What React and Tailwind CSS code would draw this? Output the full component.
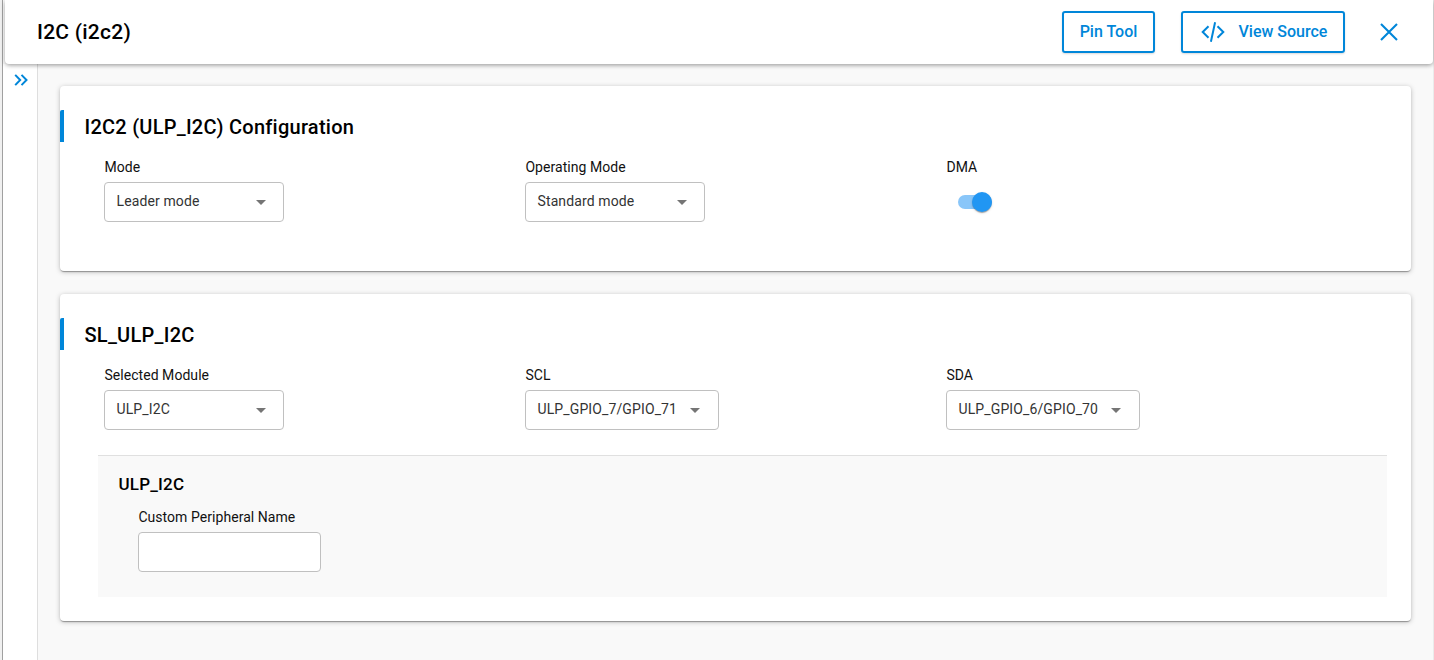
const BLUE = '#0086d9';

function Caret() {
  return (
    <svg className="h-6 w-6 shrink-0 fill-[#757575]" viewBox="0 0 24 24">
      <path d="M7 10l5 5 5-5z" />
    </svg>
  );
}

function Select({ value, wide = false }) {
  return (
    <button
      className={`flex h-10 items-center justify-between rounded-[4px] border border-[#c0c0c0] bg-white pl-[11.5px] text-left ${wide ? 'w-[194px] pr-[11px]' : 'w-[180px] pr-[10.5px]'}`}
    >
      <span className="relative -top-px text-[14px] leading-5 tracking-[0.12px] whitespace-nowrap text-[#333]">{value}</span>
      <Caret />
    </button>
  );
}

function Field({ label, children }) {
  return (
    <div className="flex flex-col items-start">
      <label className="h-[25px] pl-[0.4px] text-[14px] leading-5 tracking-[0.05px] text-[#111]">{label}</label>
      {children}
    </div>
  );
}

function Toggle() {
  return (
    <div className="mt-[10px] ml-3 flex h-5 w-[34px] items-center rounded-full">
      <div className="flex h-[14px] w-[34px] items-center justify-end rounded-full bg-[#89c6f9]">
        <div className="h-5 w-5 shrink-0 rounded-full bg-[#2196f3] shadow-[0_2px_1px_-1px_rgba(0,0,0,0.2),0_1px_1px_rgba(0,0,0,0.14),0_1px_3px_rgba(0,0,0,0.12)]" />
      </div>
    </div>
  );
}

function Card({ title, className, children }) {
  return (
    <section
      className={`rounded-[4px] bg-white pt-6 shadow-[0_2px_1px_-1px_rgba(0,0,0,0.2),0_1px_1px_rgba(0,0,0,0.14),0_1px_5px_rgba(0,0,0,0.25)] ${className}`}
    >
      <h2 className="flex h-8 items-center rounded-tl-[2px] border-l-4 border-[#0086d9] pl-[20.5px] text-[20px] font-medium tracking-[0.25px] text-black">
        <span className="relative top-px">{title}</span>
      </h2>
      {children}
    </section>
  );
}

export default function App() {
  return (
    <div className="flex h-[660px] w-[1434px] overflow-hidden bg-[#f9f9f9] font-[Roboto,sans-serif]">
      <div className="w-[3px] shrink-0 border-r border-[#a0a0a0] bg-[#f0f0f0]" />
      <div className="flex min-w-0 flex-1 flex-col border-r border-[#ebebeb]">
        <header className="z-10 ml-[2px] flex h-[64px] shrink-0 items-center rounded-b-[4px] bg-white pl-8 shadow-[0_2px_4px_-1px_rgba(0,0,0,0.25),0_1px_5px_rgba(0,0,0,0.2)]">
          <h1 className="flex-1 text-[21px] leading-7 font-medium tracking-[0.24px] text-black">I2C (i2c2)</h1>
          <button className="flex h-[42px] w-[93px] items-center justify-center rounded-[3px] border-2 border-[#0086d9] text-[16px] font-medium text-[#0086d9] shadow-[0_1px_2px_rgba(0,0,0,0.15)]">
            Pin Tool
          </button>
          <button className="ml-[26px] flex h-[42px] w-[164px] items-center rounded-[3px] border-2 border-[#0086d9] pl-[18px] text-[16px] font-medium text-[#0086d9] shadow-[0_1px_2px_rgba(0,0,0,0.15)]">
            <svg className="mr-[13.5px] h-[20px] w-[24px]" viewBox="0 0 24 20" fill="none" stroke={BLUE} strokeWidth="2">
              <path d="M7.5 4.2L1.7 10l5.8 5.8M16.5 4.2l5.8 5.8-5.8 5.8M14.1.3L9.9 19.7" />
            </svg>
            View Source
          </button>
          <svg className="mr-[35px] ml-[35px] h-[18px] w-[18px]" viewBox="0 0 18 18" fill="none" stroke={BLUE} strokeWidth="2.1">
            <path d="M1 1l16 16M17 1L1 17" />
          </svg>
        </header>
        <div className="flex min-h-0 flex-1">
          <aside className="w-[35px] shrink-0 border-r border-[#dedede] bg-white pt-[10px] pl-[11px]">
            <svg className="h-3 w-[15px]" viewBox="0 0 15 12" fill="none" stroke={BLUE} strokeWidth="2">
              <path d="M1.2 .9l5 5.1-5 5.1M7.5 .9l5 5.1-5 5.1" />
            </svg>
          </aside>
          <main className="flex-1 pt-[22px] pl-[22px]">
            <Card title="I2C2 (ULP_I2C) Configuration" className="h-[185px] w-[1351px]">
              <div className="grid grid-cols-[421px_421px_auto] pt-[15px] pl-[44px]">
                <Field label="Mode"><Select value="Leader mode" /></Field>
                <Field label="Operating Mode"><Select value="Standard mode" /></Field>
                <Field label="DMA"><Toggle /></Field>
              </div>
            </Card>
            <Card title="SL_ULP_I2C" className="mt-[23px] h-[327px] w-[1351px]">
              <div className="grid grid-cols-[421px_421px_auto] pt-[15px] pl-[44px]">
                <Field label="Selected Module"><Select value="ULP_I2C" /></Field>
                <Field label="SCL"><Select wide value="ULP_GPIO_7/GPIO_71" /></Field>
                <Field label="SDA"><Select wide value="ULP_GPIO_6/GPIO_70" /></Field>
              </div>
              <div className="mt-[25px] mr-6 ml-[38px] h-[142px] border-t border-[#e0e0e0] bg-[#f9f9f9] pt-4 pl-5">
                <h3 className="h-[35px] pl-[0.5px] text-[17px] leading-6 font-medium tracking-[0.2px] text-black">ULP_I2C</h3>
                <div className="pl-5">
                  <Field label="Custom Peripheral Name">
                    <input className="h-10 w-[183px] rounded-[4px] border border-[#c0c0c0] bg-white px-3 text-[14px]" />
                  </Field>
                </div>
              </div>
            </Card>
          </main>
        </div>
      </div>
    </div>
  );
}
